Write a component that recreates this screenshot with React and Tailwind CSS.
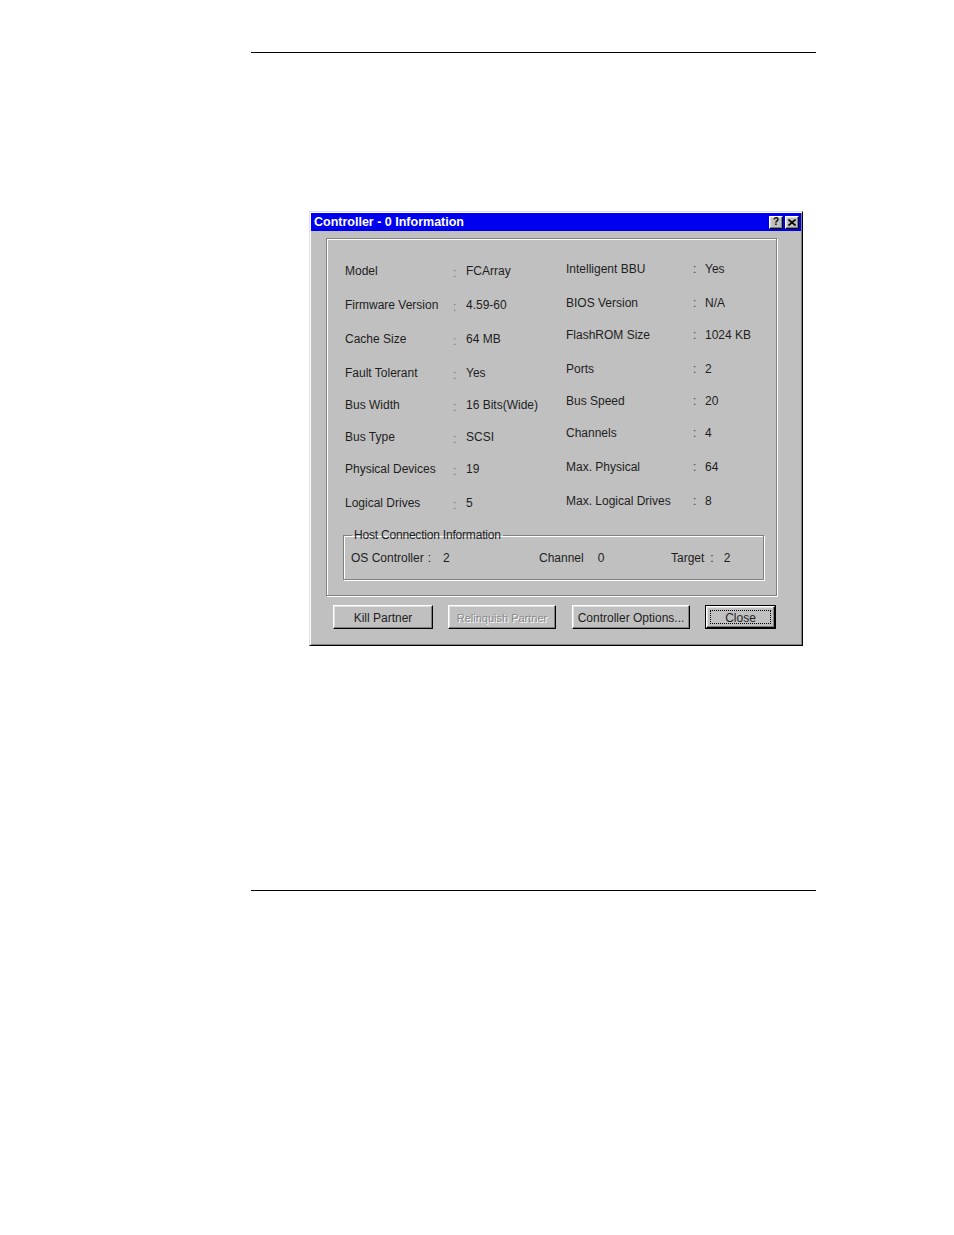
const leftRows = [
  { label: "Model", value: "FCArray", h: "h-[34px]" },
  { label: "Firmware Version", value: "4.59-60", h: "h-[34px]" },
  { label: "Cache Size", value: "64 MB", h: "h-[34px]" },
  { label: "Fault Tolerant", value: "Yes", h: "h-[32px]" },
  { label: "Bus Width", value: "16 Bits(Wide)", h: "h-[32px]" },
  { label: "Bus Type", value: "SCSI", h: "h-[32px]" },
  { label: "Physical Devices", value: "19", h: "h-[34px]" },
  { label: "Logical Drives", value: "5", h: "h-[34px]" },
];

const rightRows = [
  { label: "Intelligent BBU", value: "Yes", h: "h-[34px]" },
  { label: "BIOS Version", value: "N/A", h: "h-[32px]" },
  { label: "FlashROM Size", value: "1024 KB", h: "h-[34px]" },
  { label: "Ports", value: "2", h: "h-[32px]" },
  { label: "Bus Speed", value: "20", h: "h-[32px]" },
  { label: "Channels", value: "4", h: "h-[34px]" },
  { label: "Max. Physical", value: "64", h: "h-[34px]" },
  { label: "Max. Logical Drives", value: "8", h: "h-[34px]" },
];

const bevel =
  "border border-t-white border-l-white border-b-black border-r-black shadow-[inset_-1px_-1px_0_#808080,inset_1px_1px_0_#dfdfdf]";

function CaptionButton({ children }) {
  return (
    <div className={`w-[14px] h-[13px] bg-[#c0c0c0] flex items-center justify-center ${bevel}`}>
      {children}
    </div>
  );
}

function Button({ children, w, disabled }) {
  return (
    <div className={`${w} h-[24px] bg-[#c0c0c0] flex items-center justify-center pt-[1px] ${bevel}`}>
      {disabled ? (
        <span className="text-[11px] text-[#8a8a8a] [text-shadow:1px_1px_0_#fff] whitespace-nowrap">{children}</span>
      ) : (
        <span className="whitespace-nowrap">{children}</span>
      )}
    </div>
  );
}

export default function App() {
  return (
    <div className="w-[954px] h-[1235px] bg-white font-['Liberation_Sans',Arial,sans-serif] text-[12px] leading-[14px] text-[#1e1e1e] flex flex-col">
      <div className="mt-[52px] ml-[251px] w-[565px] h-[1px] bg-black" />

      {/* dialog */}
      <div className="mt-[158px] ml-[309px] w-[494px] h-[435px] bg-[#c0c0c0] border border-t-[#dfdfdf] border-l-[#dfdfdf] border-b-black border-r-black shadow-[inset_1px_1px_0_#fff,inset_-1px_-1px_0_#808080] p-[1px] flex flex-col">
        <div className="h-[18px] bg-[#0000f0] flex items-center justify-between pl-[3px] pr-[2px]">
          <span className="text-white font-bold text-[12.5px]">Controller - 0 Information</span>
          <div className="flex gap-[2px]">
            <CaptionButton>
              <span className="text-[10px] leading-[10px] font-bold text-black">?</span>
            </CaptionButton>
            <CaptionButton>
              <svg width="8" height="7" viewBox="0 0 8 7">
                <path d="M0.5 0.5 L7.5 6.5 M7.5 0.5 L0.5 6.5" stroke="#000" strokeWidth="1.6" />
              </svg>
            </CaptionButton>
          </div>
        </div>

        {/* group box */}
        <div className="mt-[7px] ml-[15px] w-[451px] h-[358px] border border-[#808080] shadow-[inset_1px_1px_0_#fff,1px_1px_0_#fff] flex flex-col">
          <div className="h-[289px] flex pl-[18px]">
            <div className="w-[221px] pt-[25px] flex flex-col">
              {leftRows.map((r) => (
                <div key={r.label} className={`${r.h} shrink-0 grid grid-cols-[108px_13px_1fr]`}>
                  <span>{r.label}</span>
                  <span className="text-[#777] translate-y-[2px]">:</span>
                  <span>{r.value}</span>
                </div>
              ))}
            </div>
            <div className="flex-1 pt-[23px] flex flex-col">
              {rightRows.map((r) => (
                <div key={r.label} className={`${r.h} shrink-0 grid grid-cols-[127px_12px_1fr]`}>
                  <span>{r.label}</span>
                  <span className="text-[#444]">:</span>
                  <span>{r.value}</span>
                </div>
              ))}
            </div>
          </div>

          <fieldset className="ml-[16px] w-[421px] h-[52px] border border-[#808080] shadow-[inset_1px_1px_0_#fff,1px_1px_0_#fff] px-[7px]">
            <legend className="ml-[1px] px-[2px] tracking-[-0.2px]">Host Connection Information</legend>
            <div className="mt-[9px] flex">
              <div className="w-[188px] flex">
                <span>OS Controller</span>
                <span className="ml-[4px]">:</span>
                <span className="ml-[12px]">2</span>
              </div>
              <div className="w-[132px] flex">
                <span>Channel</span>
                <span className="ml-[14px]">0</span>
              </div>
              <div className="flex">
                <span>Target</span>
                <span className="ml-[6px]">:</span>
                <span className="ml-[10px]">2</span>
              </div>
            </div>
          </fieldset>
        </div>

        {/* buttons */}
        <div className="mt-[9px] ml-[22px] flex">
          <Button w="w-[100px]">Kill Partner</Button>
          <div className="ml-[15px]">
            <Button w="w-[108px]" disabled>
              Relinquish Partner
            </Button>
          </div>
          <div className="ml-[16px]">
            <Button w="w-[118px]">Controller Options...</Button>
          </div>
          <div className="ml-[15px] w-[71px] h-[24px] border border-black">
            <div className={`w-full h-full bg-[#c0c0c0] flex items-center justify-center p-[3px] ${bevel}`}>
              <div className="w-full h-full border border-dotted border-black flex items-center justify-center pt-[1px]">
                Close
              </div>
            </div>
          </div>
        </div>
      </div>

      <div className="mt-[244px] ml-[251px] w-[565px] h-[1px] bg-black" />
    </div>
  );
}
